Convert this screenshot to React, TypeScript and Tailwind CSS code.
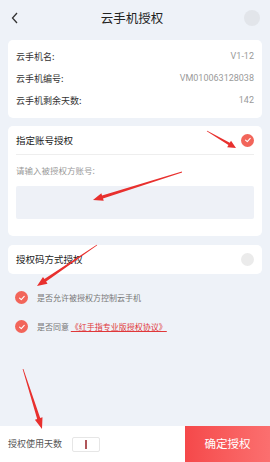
import React from "react";

const font = { fontFamily: '"Noto Sans CJK SC", "Noto Sans", sans-serif' };

function Check({ size = 13 }: { size?: number }) {
  return (
    <span
      className="flex items-center justify-center rounded-full bg-[#f2655a] shrink-0"
      style={{ width: size, height: size }}
    >
      <svg width={size * 0.6} height={size * 0.6} viewBox="0 0 10 10">
        <polyline points="2,5.2 4.2,7.2 8,3" fill="none" stroke="white" strokeWidth="1.4" strokeLinecap="round" strokeLinejoin="round" />
      </svg>
    </span>
  );
}

function arrowPoints(x1: number, y1: number, x2: number, y2: number, headLen = 10, headW = 4.5, tailW = 0.4, neckW = 1.6) {
  const dx = x2 - x1, dy = y2 - y1;
  const L = Math.hypot(dx, dy);
  const ux = dx / L, uy = dy / L;
  const px = -uy, py = ux;
  const nx = x2 - ux * headLen, ny = y2 - uy * headLen;
  const pts: [number, number][] = [
    [x1 + px * tailW, y1 + py * tailW],
    [nx + px * neckW, ny + py * neckW],
    [nx + px * headW, ny + py * headW],
    [x2, y2],
    [nx - px * headW, ny - py * headW],
    [nx - px * neckW, ny - py * neckW],
    [x1 - px * tailW, y1 - py * tailW],
  ];
  return pts.map((p) => p.join(",")).join(" ");
}

export default function App() {
  return (
    <div className="relative w-[270px] h-[462px] bg-[#eef2f8] flex flex-col overflow-hidden" style={font}>
      {/* header */}
      <div className="h-[36px] flex items-center justify-between px-[10px]">
        <svg width="10" height="14" viewBox="0 0 10 14">
          <polyline points="7,2 2.5,7 7,12" fill="none" stroke="#333" strokeWidth="1.3" />
        </svg>
        <div className="text-[12.5px] text-[#222] leading-none">云手机授权</div>
        <span className="w-[16px] h-[16px] rounded-full bg-[#e2e5ea]" />
      </div>

      {/* card 1 */}
      <div className="mx-2 mt-1 bg-white rounded-[5px] px-2 py-[6px]">
        {[
          ["云手机名:", "V1-12"],
          ["云手机编号:", "VM010063128038"],
          ["云手机剩余天数:", "142"],
        ].map(([k, v]) => (
          <div key={k} className="h-[22px] flex items-center justify-between">
            <span className="text-[9px] text-[#333]">{k}</span>
            <span className="text-[9px] text-[#9a9a9a]" style={{ fontFamily: "Roboto, sans-serif" }}>{v}</span>
          </div>
        ))}
      </div>

      {/* card 2 */}
      <div className="mx-2 mt-2 bg-white rounded-[5px] px-2 pb-[17px]">
        <div className="h-[29px] flex items-center justify-between border-b border-[#eeeeee]">
          <span className="text-[9.5px] text-[#222]">指定账号授权</span>
          <Check size={13} />
        </div>
        <div className="h-[31px] flex items-center">
          <span className="text-[8.5px] text-[#999]">请输入被授权方账号:</span>
        </div>
        <div className="h-[33px] bg-[#eef1f7] rounded-[2px]" />
      </div>

      {/* card 3 */}
      <div className="mx-2 mt-[9px] bg-white rounded-[5px] px-2 h-[29px] flex items-center justify-between">
        <span className="text-[9.5px] text-[#222]">授权码方式授权</span>
        <span className="w-[13px] h-[13px] rounded-full bg-[#ebebeb]" />
      </div>

      {/* options */}
      <div className="pl-[15px] mt-[17px] flex flex-col gap-[16px]">
        <div className="h-[13px] flex items-center gap-[9px]">
          <Check size={13} />
          <span className="text-[8px] text-[#777]">是否允许被授权方控制云手机</span>
        </div>
        <div className="h-[13px] flex items-center gap-[9px]">
          <Check size={13} />
          <span className="text-[8px] text-[#777]">
            是否同意 <span className="text-[#e0383a] underline">《红手指专业版授权协议》</span>
          </span>
        </div>
      </div>

      <div className="flex-1" />

      {/* bottom bar */}
      <div className="h-[36px] flex bg-white">
        <div className="flex-1 flex items-center pl-2 gap-[10px]">
          <span className="text-[9px] text-[#555]">授权使用天数</span>
          <div className="w-[28px] h-[15px] border border-[#e6e6e6] rounded-[2px] flex items-center justify-center">
            <span className="w-[1.5px] h-[9px] bg-[#b0565a]" />
          </div>
        </div>
        <div className="w-[85px] flex items-center justify-center bg-gradient-to-r from-[#f5484a] to-[#fb6f6f]">
          <span className="text-[11.5px] text-white">确定授权</span>
        </div>
      </div>

      {/* annotation arrows */}
      <svg className="absolute inset-0 pointer-events-none" width="270" height="462" viewBox="0 0 270 462">
        <polygon fill="#e8302e" points={arrowPoints(207, 131, 236, 148, 8, 3.8, 0.4, 1.3)} />
        <polygon fill="#e8302e" points={arrowPoints(182, 172, 93, 200, 10, 4, 0.4, 1.5)} />
        <polygon fill="#e8302e" points={arrowPoints(97, 245, 37, 286, 10, 4, 0.4, 1.5)} />
        <polygon fill="#e8302e" points={arrowPoints(23, 369, 42, 429, 11, 4, 0.4, 1.6)} />
      </svg>
    </div>
  );
}
